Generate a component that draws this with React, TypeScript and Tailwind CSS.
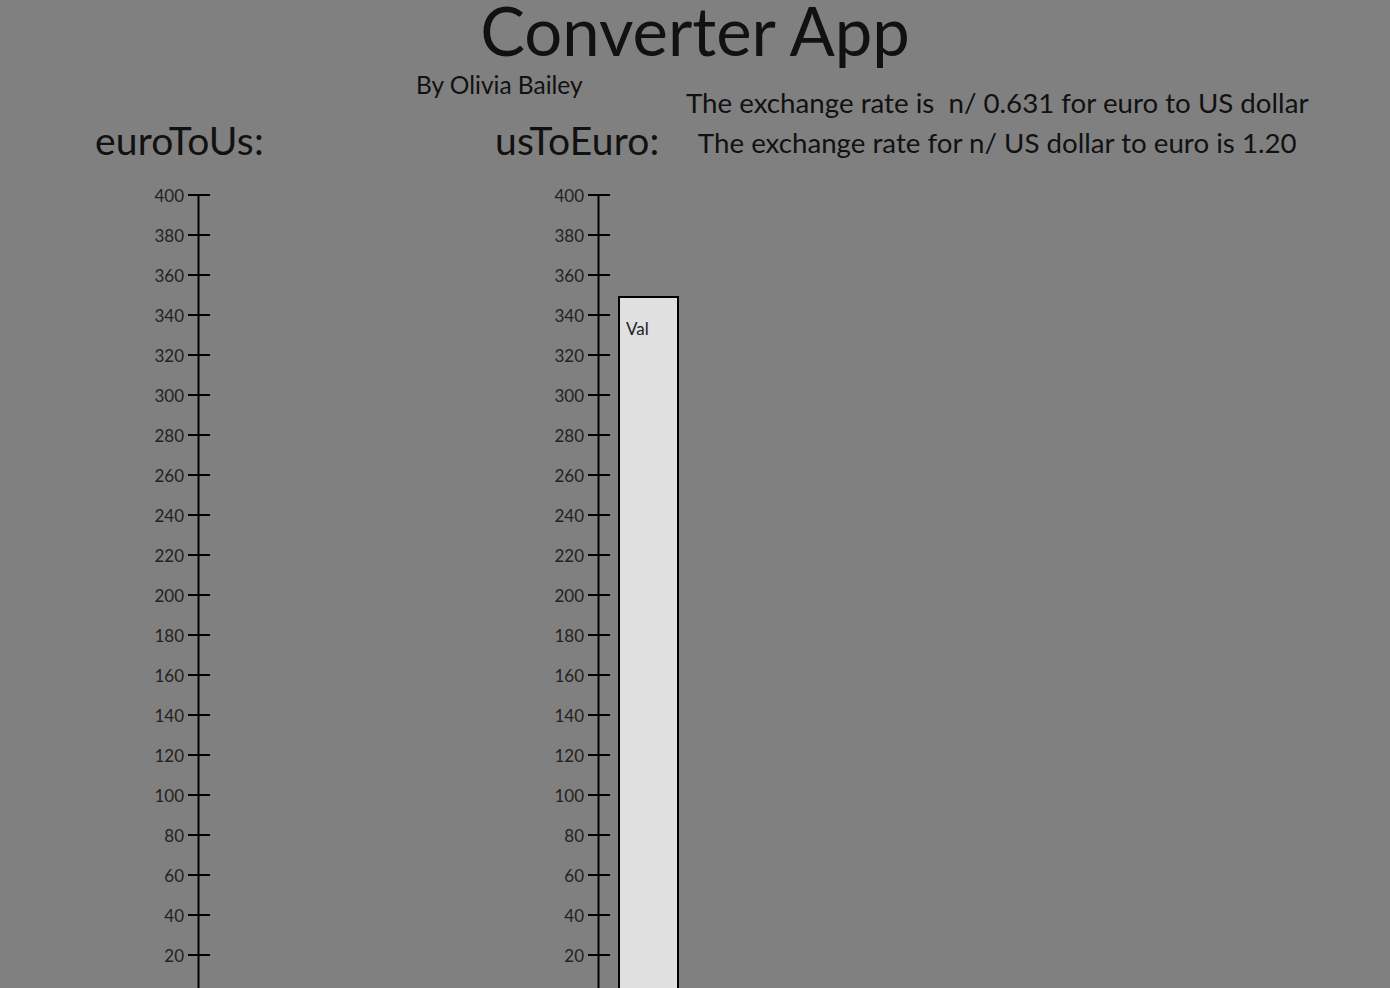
import React from "react";

const ticks = Array.from({ length: 20 }, (_, i) => 400 - i * 20);

function Chart({ label, value }: { label: string; value?: number }) {
  const top = 15;
  const y = (v: number) => top + (400 - v) * 2;
  return (
    <div className="w-[400px] shrink-0">
      <h2 className="mt-[18px] pl-[95px] text-[39px] leading-[44px] font-normal tracking-[0.2px]">{label}</h2>
      <svg width={400} height={830} className="mt-[18px] block">
        <line x1={198.5} x2={198.5} y1={y(400) - 1} y2={y(0)} stroke="#000" strokeWidth={2} />
        {ticks.map((t) => (
          <g key={t}>
            <line x1={188} x2={210} y1={y(t)} y2={y(t)} stroke="#000" strokeWidth={2} />
            <text
              x={184}
              y={y(t)}
              textAnchor="end"
              dominantBaseline="central"
              fontSize={17}
              fill="#222"
              fontFamily="Lato, sans-serif"
            >
              {t}
            </text>
          </g>
        ))}
        {value !== undefined && (
          <g>
            <rect x={219} y={y(value)} width={59} height={800} fill="#e0e0e0" stroke="#000" strokeWidth={2} />
            <text x={226} y={y(value) + 38} fontSize={17} fill="#222" fontFamily="Lato, sans-serif">
              Val
            </text>
          </g>
        )}
      </svg>
    </div>
  );
}

export default function App() {
  return (
    <div className="h-[988px] overflow-hidden bg-[#808080] font-['Lato',sans-serif] text-[#111]">
      <h1 className="text-center text-[67px] leading-[60px] font-normal">Converter App</h1>
      <div className="flex">
        <div className="w-[686px] shrink-0">
          <p className="mt-[10px] pl-[416px] text-[24.5px] leading-[30px]">By Olivia Bailey</p>
          <div className="flex">
            <Chart label="euroToUs:" />
            <Chart label="usToEuro:" value={349} />
          </div>
        </div>
        <div className="mt-[23px] text-center text-[27.7px] leading-[40px] whitespace-pre">
          <p>The exchange rate is  n/ 0.631 for euro to US dollar</p>
          <p>The exchange rate for n/ US dollar to euro is 1.20</p>
        </div>
      </div>
    </div>
  );
}
